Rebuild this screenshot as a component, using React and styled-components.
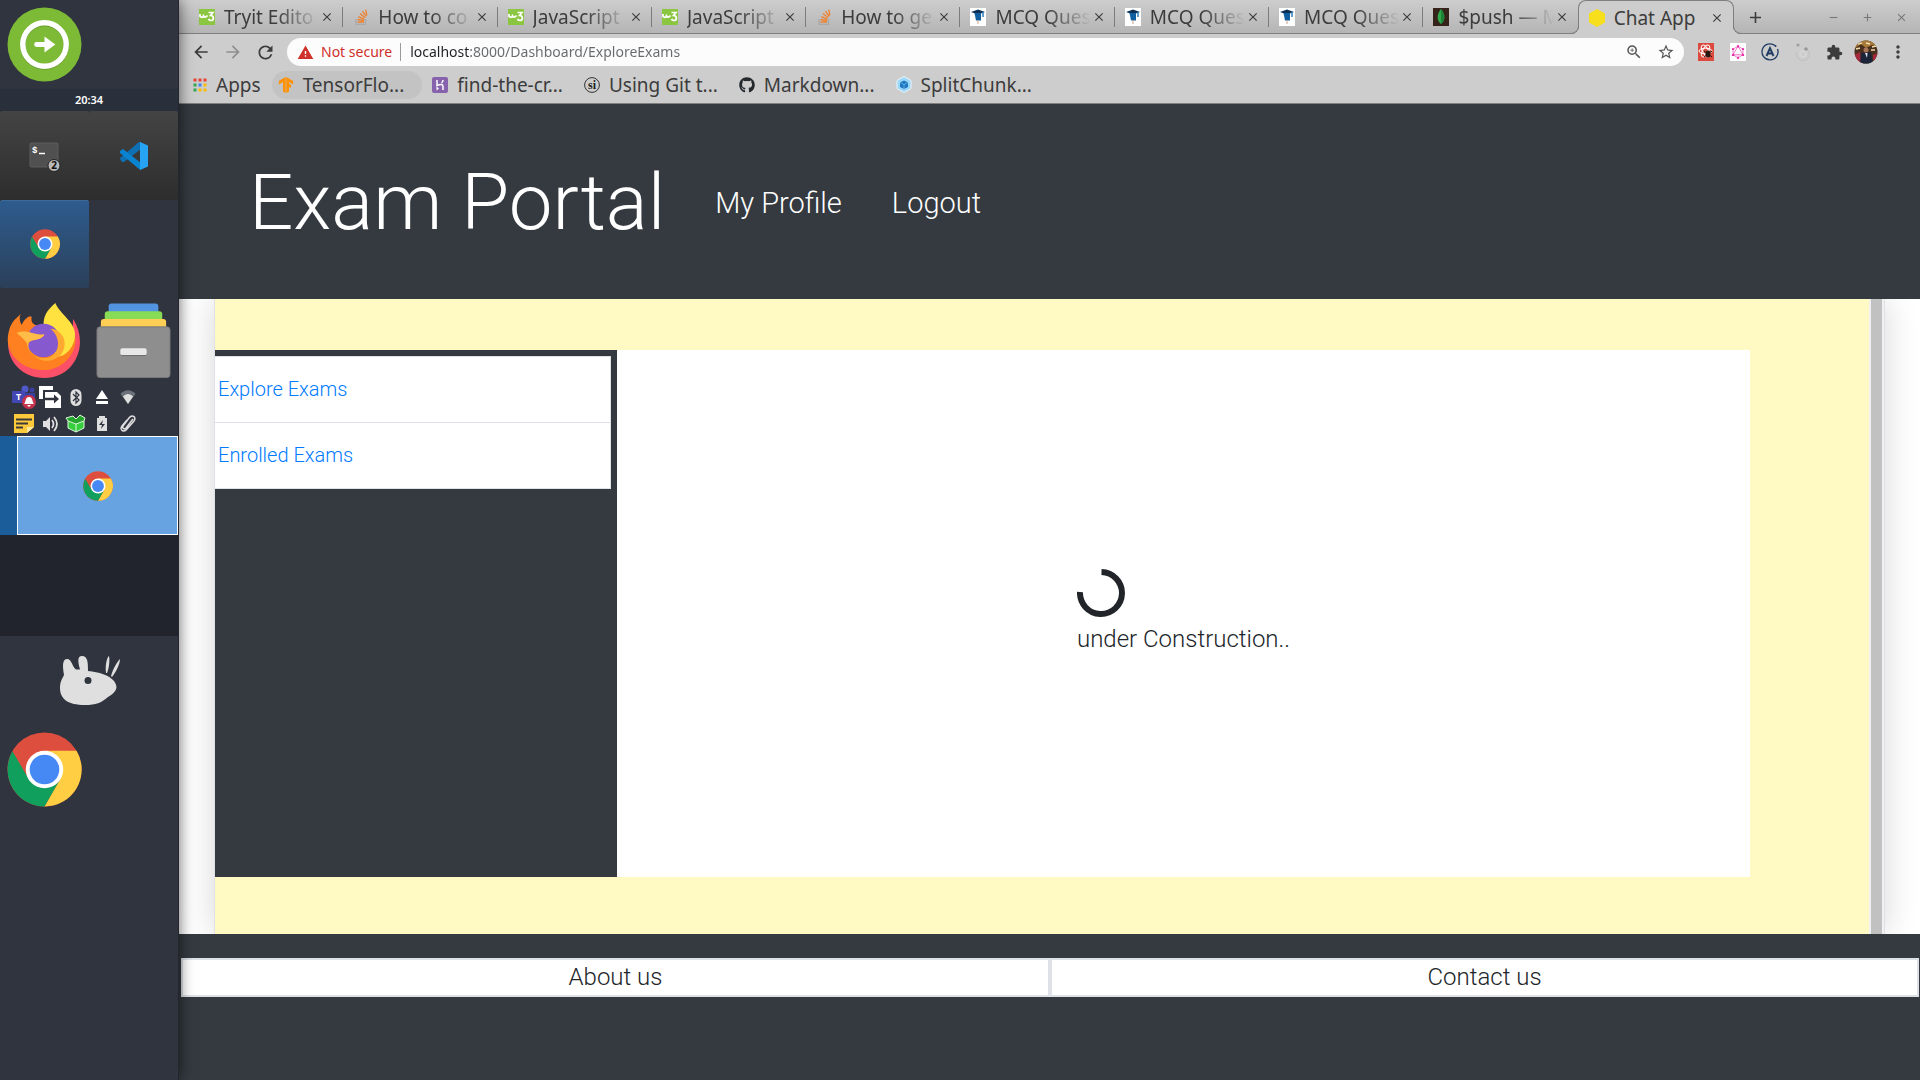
import React from "react";
import styled, { createGlobalStyle, css } from "styled-components";
import { FaGithub } from "react-icons/fa";
import { SiTensorflow, SiGraphql } from "react-icons/si";
import {
  MdArrowBack,
  MdArrowForward,
  MdRefresh,
  MdExtension,
  MdStarBorder,
  MdMoreVert,
  MdClose,
  MdAdd,
  MdRemove,
  MdZoomIn,
  MdWarning,
} from "react-icons/md";

const GlobalStyle = createGlobalStyle`
  *, *::before, *::after { box-sizing: border-box; }
  body { margin: 0; font-family: Roboto, "Noto Sans", sans-serif; color: #212529; background: #343a40; }
  button { font: inherit; color: inherit; border: 0; padding: 0; background: none; cursor: pointer; }
  a { text-decoration: none; color: inherit; }
  ul { list-style: none; margin: 0; padding: 0; }
  svg { display: block; flex: none; }
`;

const Desktop = styled.div`
  display: grid;
  grid-template-columns: 179px minmax(0, 1fr);
  min-height: 100vh;
`;

/* ---------- dock ---------- */

const Dock = styled.aside`
  position: relative;
  z-index: 2;
  display: flex;
  flex-direction: column;
  background: #30343f;
  border-right: 1px solid #23262f;
  box-shadow: 0 0 14px rgba(0, 0, 0, 0.6);
`;

const DockRow = styled.div`
  display: grid;
  grid-template-columns: 89px 89px;
  height: ${(p) => p.$height}px;
`;

const DockButton = styled.button`
  display: flex;
  align-items: center;
  justify-content: center;
`;

const Clock = styled.time`
  height: 22px;
  background: #2a303b;
  color: #fff;
  font: 600 11px/22px "Noto Sans", sans-serif;
  text-align: center;
`;

const TaskButton = styled(DockButton)`
  height: 89px;
  border-radius: 3px 3px 0 0;
  background: linear-gradient(#444, #2d2d2d);
  ${(p) =>
    p.$active &&
    css`
      height: 88px;
      border-radius: 3px;
      box-shadow: inset 0 1px #3d6a99;
      background: linear-gradient(#2e5c8f, #2b4059);
    `}
`;

const Tray = styled.div`
  display: grid;
  grid-template-columns: repeat(5, 26px);
  grid-auto-rows: 26px;
  height: 51px;
  padding-left: 11px;
`;

const Workspace = styled.div`
  display: flex;
  height: 99px;
  padding-left: 17px;
  background: #1b5c9b;
`;

const WorkspaceWindow = styled(DockButton)`
  flex: 1;
  border: 1px solid #fff;
  background: #68a3e1;
`;

const EmptyWorkspace = styled.div`
  height: 101px;
  background: #21242d;
`;

const MenuButton = styled(DockButton)`
  height: 89px;
`;

/* ---------- browser ---------- */

const Browser = styled.div`
  display: flex;
  flex-direction: column;
  min-width: 0;
`;

const Chrome = styled.header`
  border-bottom: 1px solid #7f7f7f;
  background: #cdcdcd;
  color: #3c3c3c;
  font-family: "Noto Sans", sans-serif;
`;

const TabStrip = styled.div`
  display: flex;
  height: 34px;
  padding-left: 10px;
  background: linear-gradient(#cdcdcd, #b4b4b4);
  box-shadow: inset 0 -1px #7f7f7f;
`;

const Tabs = styled.div`
  display: flex;
  flex: 1;
  min-width: 0;
`;

const Tab = styled.div`
  position: relative;
  display: flex;
  align-items: center;
  flex: 1 1 0;
  min-width: 0;
  padding: 0 9px 0 10px;
  ${(p) =>
    !p.$active &&
    !p.$last &&
    css`
      &::after {
        content: "";
        position: absolute;
        right: 0;
        top: 7px;
        width: 1px;
        height: 20px;
        background: #7c7c7c;
      }
    `}
  ${(p) =>
    p.$active &&
    css`
      border: 1px solid #7f7f7f;
      border-bottom: 0;
      border-radius: 8px 8px 0 0;
      background: #cdcdcd;
      &::before,
      &::after {
        content: "";
        position: absolute;
        bottom: 0;
        width: 8px;
        height: 8px;
        border-bottom: 1px solid #7f7f7f;
      }
      &::before {
        left: -8px;
        border-right: 1px solid #7f7f7f;
        border-bottom-right-radius: 8px;
        box-shadow: 3px 3px 0 #cdcdcd;
      }
      &::after {
        right: -8px;
        border-left: 1px solid #7f7f7f;
        border-bottom-left-radius: 8px;
        box-shadow: -3px 3px 0 #cdcdcd;
      }
    `}
`;

const TabTitle = styled.span`
  flex: 1;
  min-width: 0;
  margin: 0 1px 0 9px;
  overflow: hidden;
  white-space: nowrap;
  font-size: 19px;
  line-height: 32px;
  ${(p) =>
    p.$fade &&
    css`
      mask-image: linear-gradient(90deg, #000 55%, transparent 100%);
    `}
`;

const IconButton = styled.button`
  display: flex;
  align-items: center;
  justify-content: center;
  flex: none;
  width: ${(p) => p.$w || 32}px;
  color: ${(p) => p.$color || "#3c3c3c"};
`;

const WindowControls = styled.div`
  display: flex;
  width: 186px;
  padding-left: 5px;
`;

const WindowButtons = styled.div`
  display: flex;
  margin-left: auto;
  padding-right: 2px;
`;

const Toolbar = styled.div`
  display: flex;
  align-items: center;
  height: 36px;
  padding: 0 6px;
`;

const AddressBar = styled.label`
  display: flex;
  align-items: center;
  flex: 1;
  height: 28px;
  margin: 0 6px;
  padding: 0 2px 0 10px;
  border-radius: 14px;
  background: #fcfcfc;
  font-size: 14px;
  color: #d0302a;
`;

const Warning = styled.span`
  padding: 0 8px 0 7px;
  margin-right: 9px;
  border-right: 1px solid #9a9a9a;
  line-height: 18px;
`;

const AddressInput = styled.input`
  flex: 1;
  min-width: 0;
  padding: 0;
  border: 0;
  outline: 0;
  font: 14px/20px "Noto Sans", sans-serif;
  color: #66696d;
  background: linear-gradient(90deg, #202124 60px, #66696d 60px);
  background-clip: text;
  -webkit-text-fill-color: transparent;
`;

const Bookmarks = styled.nav`
  display: flex;
  align-items: center;
  height: 33px;
  padding: 0 0 4px 4px;
`;

const Bookmark = styled.a`
  display: flex;
  align-items: center;
  gap: 9px;
  height: 28px;
  padding: 0 11px 0 10px;
  border-radius: 14px;
  font-size: 19px;
  line-height: 28px;
  white-space: nowrap;
  ${(p) =>
    p.$hover &&
    css`
      padding: 0 18px 0 6px;
      background: #c3c3c3;
    `}
`;

/* ---------- page ---------- */

const Page = styled.div`
  display: flex;
  flex: 1;
  flex-direction: column;
  background: #fff;
  font-weight: 300;
`;

const SiteHeader = styled.header`
  position: relative;
  z-index: 1;
  display: flex;
  align-items: center;
  gap: 50px;
  height: 195px;
  padding: 2px 0 0 70px;
  background: #343a40;
  color: #fff;
`;

const Brand = styled.a`
  font-size: 78px;
  line-height: 96px;
`;

const SiteNav = styled.ul`
  display: flex;
  gap: 50px;
  font-size: 29px;
  line-height: 44px;
`;

const Main = styled.main`
  display: flex;
  flex: 1;
  padding: 0 35px;
  overflow: hidden;
`;

const Board = styled.div`
  display: flex;
  flex: 1;
  border: solid #dee2e6;
  border-width: 0 1px;
  background: #fff9c4;
  box-shadow: 0 0 32px rgba(0, 0, 0, 0.16);
`;

const BoardBody = styled.div`
  display: grid;
  grid-template-columns: 402px minmax(0, 1fr);
  flex: 1;
  padding: 51px 119px 57px 0;
`;

const ScrollTrack = styled.div`
  display: flex;
  width: 15px;
  padding: 0 2px;
  background: #f1f1f1;
`;

const ScrollThumb = styled.div`
  flex: 1;
  background: #c1c1c1;
`;

const Sidebar = styled.nav`
  padding: 6px 6px 0 0;
  background: #343a40;
`;

const MenuList = styled.ul`
  border: solid #dee2e6;
  border-width: 1px 1px 0 0;
  background: #fff;
`;

const MenuItem = styled.li`
  border-bottom: 1px solid #dee2e6;
`;

const MenuLink = styled.a`
  display: block;
  padding: 0 3px;
  font-size: 20px;
  line-height: 65px;
  color: #007bff;
`;

const Content = styled.section`
  display: flex;
  align-items: center;
  justify-content: center;
  background: #fff;
`;

const Status = styled.div`
  display: grid;
  gap: 4px;
  padding-bottom: 2px;
  font-size: 24px;
  line-height: 36px;
`;

const SiteFooter = styled.footer`
  display: flex;
  position: relative;
  padding: 24px 1px 83px 2px;
  background: #343a40;
`;

const FooterLink = styled.a`
  flex: 1;
  border: 2px solid #dee2e6;
  background: #fff;
  font-size: 24px;
  line-height: 35px;
  text-align: center;
`;

/* ---------- drawings ---------- */

const ChromeLogo = ({ size }) => (
  <svg width={size} height={size} viewBox="0 0 76 76">
    <circle cx="38" cy="38" r="37.5" fill="#de4e3e" />
    <path d="M38 19H70.5A37.5 37.5 0 0 1 38 75.5L54 47.500Z" fill="#ffce42" />
    <path d="M5.500 19.500A37.500 37.500 0 0 0 38 75.500L54 47.500 22 47.500Z" fill="#109f5c" />
    <circle cx="38" cy="38" r="19" fill="#fff" />
    <circle cx="38" cy="38" r="15" fill="#4688f4" />
  </svg>
);

const LauncherIcon = () => (
  <svg width="75" height="75" viewBox="0 0 76 76">
    <circle cx="38" cy="38" r="37.500" fill="#7dba35" />
    <circle cx="38" cy="39" r="22" fill="none" stroke="#5f9427" strokeWidth="5" />
    <circle cx="38" cy="38" r="22" fill="none" stroke="#fff" strokeWidth="5.500" />
    <path d="M30 38H41" stroke="#fff" strokeWidth="5" strokeLinecap="round" />
    <path d="M38 30L49 38 38 46Z" fill="#fff" />
  </svg>
);

const TerminalIcon = () => (
  <svg width="32" height="32" viewBox="0 0 32 32">
    <rect x="1" y="3" width="28" height="24" rx="1" fill="#505050" stroke="#5d5d5d" />
    <text x="3" y="13" fill="#fff" fontSize="9" fontWeight="bold" fontFamily="Liberation Mono, monospace">$</text>
    <path d="M10 13.500H16" stroke="#fff" strokeWidth="1.500" />
    <circle cx="25" cy="25.500" r="6" fill="#b9b9b9" stroke="#222" />
    <text x="25" y="29" fill="#111" fontSize="10" fontWeight="bold" textAnchor="middle" fontFamily="Noto Sans, sans-serif">2</text>
  </svg>
);

const CodeIcon = () => (
  <svg width="30" height="30" viewBox="0 0 30 30">
    <path d="M1 18L3 21 5 21 22 8V1L20 1 1 17Z" fill="#0f6fb3" />
    <path d="M1 10L4 8 22 22V29L20 28 1 12Z" fill="#0a83d0" />
    <path d="M21 1L29 4.500V25.500L21 29V1Z" fill="#27a3f3" />
  </svg>
);

const FirefoxIcon = () => (
  <svg width="75" height="77" viewBox="0 0 76 78">
    <path d="M67 17C84 44 68 77 38 77 16 77 1 61 1 42L66 40Z" fill="#fb5067" />
    <path d="M14 12C11 18 15 23 15 23 19 14 24 14 25 15 24 20 26 24 33 24L66 28C77 44 60 69 38 69 12 69-4 49 2 29 5 18 11 16 14 12Z" fill="#ff8020" />
    <path d="M49 1C40 9 37 14 37 24L50 55C58 57 69 46 69 33 69 20 54 13 49 1Z" fill="#ffe140" />
    <circle cx="37" cy="39" r="17" fill="#8659cf" />
    <path d="M10 32C21 27 26 34 38 33 34 40 24 37 22 42 20 50 28 58 38 57 54 56 56 36 44 27 58 28 63 44 54 54 39 68 18 53 20 39Z" fill="#ffa930" />
    <path d="M10 31C21 27 27 34 38 33 33 41 24 36 21 42Z" fill="#ffbc48" />
  </svg>
);

const FilesIcon = () => (
  <svg width="75" height="77" viewBox="0 0 77 78">
    <rect x="13" y="1" width="51" height="20" rx="3" fill="#5294e2" />
    <rect x="9" y="9" width="59" height="20" rx="3" fill="#87db55" />
    <rect x="5" y="17" width="67" height="20" rx="3" fill="#ffce55" />
    <rect x="1" y="25" width="75" height="52" rx="3" fill="#8e8e8e" stroke="#777" />
    <rect x="25" y="47" width="27" height="7" rx="2" fill="#e8e8e8" />
    <path d="M26 54.500H51" stroke="#6e6e6e" />
  </svg>
);

const MouseIcon = () => (
  <svg width="62" height="52" viewBox="-1 0 62 52">
    <path d="M5 20C3 9 4 4 8 4 13 4 13 12 17 14.500H21C19 7 18 1 23 1 29 1 29 8 29 16 40 17 50 20 55 26 60 33 57 37 49 42 42 48 37 50 26 50 9 50 1 44 1 33 1 27 3 24 5 20Z" fill="#dfdfdf" />
    <circle cx="29" cy="25.500" r="3.500" fill="#30343f" />
    <path d="M47 18C46 10 48 2 50 1 51 5 50 14 48 18ZM52 21C54 14 58 7 61 4 61 9 57 17 53 22Z" fill="#dfdfdf" />
  </svg>
);

const tray = {
  teams: (
    <>
      <circle cx="14" cy="4" r="3.500" fill="#5059c9" />
      <circle cx="21" cy="5" r="2.500" fill="#3940a0" />
      <path d="M9 8H24V18H9Z" fill="#3940a0" />
      <rect x="1" y="6" width="13" height="12" rx="1" fill="#4347b3" />
      <text x="7.500" y="15" textAnchor="middle" fontSize="9" fontWeight="bold" fill="#fff" fontFamily="Noto Sans, sans-serif">T</text>
      <circle cx="18" cy="17" r="7" fill="#c4314b" />
      <path d="M13 19C15 17 14 12 18 12S21 17 23 19ZM16 20H20L18 22Z" fill="#fff" />
    </>
  ),
  share: (
    <>
      <path d="M4 14H2V1H16V5H6V14H4Z" fill="#fff" />
      <path d="M8 7H20L24 11V23H8Z" fill="#fff" />
      <path d="M8 14H19" stroke="#30343f" strokeWidth="2.500" />
      <path d="M17 9.500L22 14 17 18.500Z" fill="#30343f" />
    </>
  ),
  bluetooth: (
    <>
      <rect x="7.500" y="4" width="11" height="17" rx="5.500" fill="#dfdfdf" />
      <path d="M10 9L16 15 13 18V7L16 10 10 16" fill="none" stroke="#30343f" strokeWidth="1.200" />
    </>
  ),
  eject: <path d="M13 5L19 14H7ZM7 16H19V19H7Z" fill="#fff" />,
  wifi: (
    <>
      <path d="M5.500 9C10 4 16 4 20.500 9L13 19Z" fill="#6c7079" />
      <path d="M8 11.500C11 8 15 8 18 11.500L13 19Z" fill="#dfdfdf" />
    </>
  ),
  note: (
    <>
      <path d="M3 3H23V16L16 22H3Z" fill="#ffc93c" />
      <path d="M23 16L16 22V16Z" fill="#ffe9a0" />
      <path d="M5 8.500H21M5 12.500H17M5 16.500H12" stroke="#3a3a3a" strokeWidth="2" />
    </>
  ),
  volume: (
    <>
      <path d="M6 10H9L13 6V20L9 16H6Z" fill="#dfdfdf" />
      <path d="M15 9Q18 13 15 17M17 6Q23 13 17 20" fill="none" stroke="#dfdfdf" strokeWidth="1.800" />
    </>
  ),
  box: (
    <>
      <path d="M5 10L13 13 21 10V17L13 21 5 17Z" fill="#35cf3c" />
      <path d="M5 10L3 7 10 5 13 8 17 4 22 7 21 10 13 13Z" fill="#26a62d" stroke="#dff7df" />
      <path d="M13 13V21M5 10V17L13 21 21 17V10" fill="none" stroke="#dff7df" />
    </>
  ),
  battery: (
    <>
      <path d="M8 7H10V5H16V7H18V20H8Z" fill="#dfdfdf" />
      <path d="M14 9L10 14H13L12 18 16 13H13Z" fill="#30343f" />
    </>
  ),
  clip: (
    <path d="M18 8L11 17C9 19 7 17 8 15L14 7C17 3 22 6 19 10L12 18C9 22 4 19 7 15L12 9" fill="none" stroke="#dfdfdf" strokeWidth="1.500" />
  ),
};

const W3 = () => (
  <svg width="16" height="16" viewBox="0 0 16 16">
    <rect width="16" height="16" fill="#8ac63f" />
    <path d="M1 5V7.500Q2.500 9 4.500 7.500V5.500V7.500Q6.500 9 8.500 6.500M9.500 3.500H14L11.500 6.500C15.500 6.500 15 11.500 12 11.500 10.500 11.500 10 11 9.500 10" fill="none" stroke="#fff" strokeWidth="1.700" />
  </svg>
);

const Stack = () => (
  <svg width="16" height="16" viewBox="0 0 16 16">
    <path d="M3 10V15.300H12.500V10" fill="none" stroke="#a9a9a9" strokeWidth="1.300" />
    <path d="M4.500 13H11M4.600 10.500L11 11.600M5.400 7.600L11.400 10.300M7 4.600L12.100 8.800M9.500 2.200L13.200 7.400M12.700 .6L13.900 6.400" stroke="#f0802c" strokeWidth="1.300" />
  </svg>
);

const Mcq = () => (
  <svg width="16" height="18" viewBox="0 0 16 18">
    <rect width="16" height="18" fill="#fff" />
    <path d="M1 4L8 1.500 15 4 8 6.500Z" fill="#0c3054" />
    <path d="M4.500 5H11V12.500H6Z" fill="#0f5fa0" />
    <path d="M13 4V9" stroke="#2b7fc0" strokeWidth="1.500" />
    <path d="M8 12V16" stroke="#c9a28a" />
  </svg>
);

const Mongo = () => (
  <svg width="16" height="18" viewBox="0 0 16 18">
    <rect width="16" height="18" fill="#35231a" />
    <path d="M8 1C13 7 12 13 8 16 4 13 3 7 8 1Z" fill="#2faa4a" />
    <path d="M8 1C13 7 12 13 8 16Z" fill="#1d8238" />
  </svg>
);

const Hexagon = () => (
  <svg width="16" height="18" viewBox="0 0 16 18">
    <path d="M8 0L16 4.500V13.500L8 18 0 13.500V4.500Z" fill="#f7df1e" />
  </svg>
);

const AppsIcon = () => (
  <svg width="14" height="14" viewBox="0 0 14 14">
    {["#ea4335", "#ea4335", "#ea4335", "#34a853", "#4285f4", "#fbbc05", "#34a853", "#fbbc05", "#fbbc05"].map((c, i) => (
      <rect key={i} x={(i % 3) * 5 + 0.5} y={Math.floor(i / 3) * 5 + 0.5} width="3" height="3" fill={c} />
    ))}
  </svg>
);

const HerokuIcon = () => (
  <svg width="16" height="16" viewBox="0 0 16 16">
    <rect width="16" height="16" rx="2" fill="#8762ad" />
    <path d="M5 3V8.500Q11 6 11 9.500V13M11 3Q11 5 9.500 6" fill="none" stroke="#fff" strokeWidth="1.500" />
    <path d="M4.500 9.500L7 11.500 4.500 13.500Z" fill="#fff" />
  </svg>
);

const SiIcon = () => (
  <svg width="16" height="16" viewBox="0 0 16 16">
    <circle cx="8" cy="8" r="7.400" fill="none" stroke="#333" />
    <text x="8" y="12" textAnchor="middle" fontSize="12" fontWeight="bold" fill="#222" fontFamily="Liberation Serif, serif">si</text>
  </svg>
);

const WebpackIcon = () => (
  <svg width="16" height="17" viewBox="0 0 16 16">
    <path d="M8 0L15 4V12L8 16 1 12V4Z" fill="#9bd7f8" stroke="#e6f5fd" />
    <path d="M8 4L12 6V10.500L8 12.500 4 10.500V6Z" fill="#1c78c0" />
    <path d="M4 6L8 8 12 6M8 8V12.500" fill="none" stroke="#7cc0ee" strokeWidth=".7" />
  </svg>
);

const ReactExt = () => (
  <svg width="16" height="18" viewBox="0 0 16 18">
    <rect width="16" height="18" fill="#dc4a3d" />
    <g fill="none" stroke="#fff" strokeWidth="1">
      <ellipse cx="7.500" cy="8" rx="6.500" ry="2.800" />
      <ellipse cx="7.500" cy="8" rx="6.500" ry="2.800" transform="rotate(60 7.500 8)" />
      <ellipse cx="7.500" cy="8" rx="6.500" ry="2.800" transform="rotate(120 7.500 8)" />
    </g>
    <ellipse cx="10" cy="11" rx="2.500" ry="3.500" fill="#28160f" />
    <path d="M6 8L14 14M14 8L6 14" stroke="#28160f" />
  </svg>
);

const GraphExt = () => (
  <svg width="16" height="18" viewBox="0 0 16 18">
    <rect width="16" height="18" fill="#fff" />
    <SiGraphql x="1" y="2" size={14} color="#e535ab" />
  </svg>
);

const ApolloExt = () => (
  <svg width="18" height="18" viewBox="0 0 18 18">
    <path d="M14 2.600A8 8 0 1 0 16.500 6" fill="none" stroke="#1f3d63" strokeWidth="1.300" />
    <circle cx="14.500" cy="3" r="1" fill="#1f3d63" />
    <path d="M5.500 13L9 5 12.500 13M7 10.500H11" fill="none" stroke="#1f3d63" strokeWidth="1.900" />
  </svg>
);

const OrbitExt = () => (
  <svg width="18" height="20" viewBox="0 0 18 20">
    <circle cx="10" cy="12" r="6.500" fill="none" stroke="#bfbfbf" strokeDasharray="22 12" />
    <circle cx="10" cy="12" r="3" fill="none" stroke="#dadada" />
    <circle cx="5" cy="3" r="1.600" fill="#a0a0a0" />
    <circle cx="13" cy="7" r="1.800" fill="#999" />
  </svg>
);

const Avatar = () => (
  <svg width="24" height="24" viewBox="0 0 24 24">
    <clipPath id="face"><circle cx="12" cy="12" r="11.500" /></clipPath>
    <g clipPath="url(#face)">
      <rect width="24" height="24" fill="#49301d" />
      <path d="M0 0H24V7L18 5 12 8 7 4 0 9Z" fill="#a87a3a" />
      <path d="M4 4L8 3M12 3L16 4M18 7L22 6M2 9L6 8M17 10L21 10" stroke="#f3ddae" strokeWidth="1.500" />
      <path d="M0 15L6 12 8 24H0ZM19 15L24 13V22L19 20Z" fill="#a3293b" />
      <path d="M7 13L17 12 19 24H6Z" fill="#1b2438" />
      <path d="M11 13L13.500 13 13 18Z" fill="#d9e2f0" />
      <circle cx="12" cy="10" r="2.500" fill="#a87558" />
    </g>
  </svg>
);

const Spinner = () => (
  <svg width="48" height="48" viewBox="0 0 48 48" role="img" aria-label="Loading">
    <path d="M24.500 3A21 21 0 1 1 3 23" fill="none" stroke="#212529" strokeWidth="6" />
  </svg>
);

/* ---------- data ---------- */

const tabs = [
  { title: "Tryit Edito", icon: W3 },
  { title: "How to co", icon: Stack },
  { title: "JavaScript", icon: W3 },
  { title: "JavaScript", icon: W3 },
  { title: "How to ge", icon: Stack },
  { title: "MCQ Ques", icon: Mcq },
  { title: "MCQ Ques", icon: Mcq },
  { title: "MCQ Ques", icon: Mcq },
  { title: "$push — M", icon: Mongo },
  { title: "Chat App", icon: Hexagon, active: true },
];

const bookmarks = [
  { label: "Apps", icon: <AppsIcon /> },
  { label: "TensorFlo...", icon: <SiTensorflow size={16} color="#ff9100" />, hover: true },
  { label: "find-the-cr...", icon: <HerokuIcon /> },
  { label: "Using Git t...", icon: <SiIcon /> },
  { label: "Markdown...", icon: <FaGithub size={16} color="#24292e" /> },
  { label: "SplitChunk...", icon: <WebpackIcon /> },
];

const extensions = [
  ["React Developer Tools", <ReactExt />],
  ["GraphQL", <GraphExt />],
  ["Apollo", <ApolloExt />],
  ["Orbit", <OrbitExt />],
  ["Extensions", <MdExtension size={17} />],
  ["Profile", <Avatar />],
  ["Menu", <MdMoreVert size={20} />],
];

export default function App() {
  return (
    <>
      <GlobalStyle />
      <Desktop>
        <Dock>
          <DockRow $height={89}>
            <DockButton aria-label="Applications"><LauncherIcon /></DockButton>
          </DockRow>
          <Clock>20:34</Clock>
          <DockRow $height={89}>
            <TaskButton aria-label="Terminal"><TerminalIcon /></TaskButton>
            <TaskButton aria-label="Code"><CodeIcon /></TaskButton>
          </DockRow>
          <DockRow $height={96}>
            <TaskButton $active aria-label="Chrome window"><ChromeLogo size={30} /></TaskButton>
          </DockRow>
          <DockRow $height={89}>
            <DockButton aria-label="Firefox"><FirefoxIcon /></DockButton>
            <DockButton aria-label="Files"><FilesIcon /></DockButton>
          </DockRow>
          <Tray>
            {Object.entries(tray).map(([name, art]) => (
              <DockButton key={name} aria-label={name}>
                <svg width="26" height="26" viewBox="0 0 26 26">{art}</svg>
              </DockButton>
            ))}
          </Tray>
          <Workspace>
            <WorkspaceWindow aria-label="Workspace 1"><ChromeLogo size={30} /></WorkspaceWindow>
          </Workspace>
          <EmptyWorkspace />
          <MenuButton aria-label="Desktop menu"><MouseIcon /></MenuButton>
          <DockRow $height={89}>
            <DockButton aria-label="Chrome"><ChromeLogo size={75} /></DockButton>
          </DockRow>
        </Dock>

        <Browser>
          <Chrome>
            <TabStrip>
              <Tabs>
                {tabs.map(({ title, icon: Icon, active }, i) => (
                  <Tab key={i} $active={active} $last={i === tabs.length - 2}>
                    <Icon />
                    <TabTitle $fade={!active}>{title}</TabTitle>
                    <IconButton $w={14} aria-label="Close tab"><MdClose size={14} /></IconButton>
                  </Tab>
                ))}
              </Tabs>
              <WindowControls>
                <IconButton aria-label="New tab"><MdAdd size={19} /></IconButton>
                <WindowButtons>
                  <IconButton $w={34} $color="#777" aria-label="Minimise"><MdRemove size={13} /></IconButton>
                  <IconButton $w={34} $color="#777" aria-label="Maximise"><MdAdd size={13} /></IconButton>
                  <IconButton $w={34} $color="#777" aria-label="Close"><MdClose size={13} /></IconButton>
                </WindowButtons>
              </WindowControls>
            </TabStrip>
            <Toolbar>
              <IconButton aria-label="Back"><MdArrowBack size={20} /></IconButton>
              <IconButton $color="#8f8f8f" aria-label="Forward"><MdArrowForward size={20} /></IconButton>
              <IconButton aria-label="Reload"><MdRefresh size={21} /></IconButton>
              <AddressBar>
                <MdWarning size={17} />
                <Warning>Not secure</Warning>
                <AddressInput aria-label="Address" defaultValue="localhost:8000/Dashboard/ExploreExams" />
                <IconButton $color="#555" aria-label="Zoom"><MdZoomIn size={18} /></IconButton>
                <IconButton $color="#555" aria-label="Bookmark this page"><MdStarBorder size={18} /></IconButton>
              </AddressBar>
              {extensions.map(([name, icon]) => (
                <IconButton key={name} aria-label={name}>{icon}</IconButton>
              ))}
            </Toolbar>
            <Bookmarks>
              {bookmarks.map(({ label, icon, hover }) => (
                <Bookmark key={label} href="#" $hover={hover}>{icon}{label}</Bookmark>
              ))}
            </Bookmarks>
          </Chrome>

          <Page>
            <SiteHeader>
              <Brand href="#">Exam Portal</Brand>
              <nav>
                <SiteNav>
                  <li><a href="#">My Profile</a></li>
                  <li><a href="#">Logout</a></li>
                </SiteNav>
              </nav>
            </SiteHeader>
            <Main>
              <Board>
                <BoardBody>
                  <Sidebar>
                    <MenuList>
                      <MenuItem><MenuLink href="#">Explore Exams</MenuLink></MenuItem>
                      <MenuItem><MenuLink href="#">Enrolled Exams</MenuLink></MenuItem>
                    </MenuList>
                  </Sidebar>
                  <Content>
                    <Status>
                      <Spinner />
                      <span>under Construction..</span>
                    </Status>
                  </Content>
                </BoardBody>
                <ScrollTrack><ScrollThumb /></ScrollTrack>
              </Board>
            </Main>
            <SiteFooter>
              <FooterLink href="#">About us</FooterLink>
              <FooterLink href="#">Contact us</FooterLink>
            </SiteFooter>
          </Page>
        </Browser>
      </Desktop>
    </>
  );
}
